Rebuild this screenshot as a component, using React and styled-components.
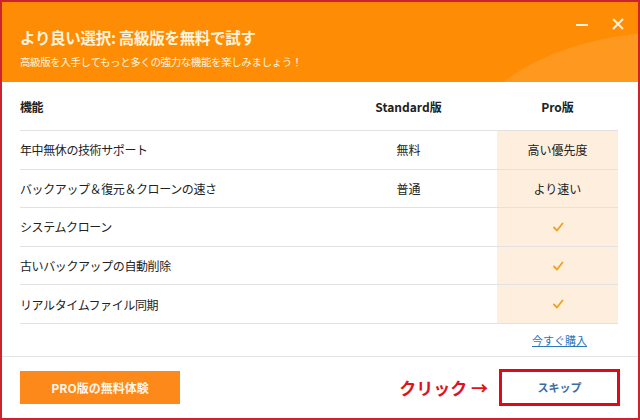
import React from 'react';
import styled, { createGlobalStyle } from 'styled-components';

const GlobalStyle = createGlobalStyle`
  html, body {
    margin: 0;
    padding: 0;
    background: #ffffff;
  }
  body {
    font-family: "Noto Sans CJK JP", "Noto Sans", sans-serif;
  }
`;

const Window = styled.div`
  box-sizing: border-box;
  width: 640px;
  height: 420px;
  border: 2px solid #cf2230;
  display: flex;
  flex-direction: column;
  background: #ffffff;
  overflow: hidden;
`;

const Header = styled.header`
  position: relative;
  height: 80px;
  flex: none;
  display: flex;
  justify-content: space-between;
  padding: 0 10px 0 18px;
  background: #fe8d05;
  overflow: hidden;

  &::after {
    content: '';
    position: absolute;
    left: 462px;
    top: 30px;
    width: 420px;
    height: 240px;
    border-radius: 50%;
    background: rgba(255, 255, 255, 0.1);
    pointer-events: none;
  }
`;

const Heading = styled.div`
  display: flex;
  flex-direction: column;
  padding-top: 24px;
  color: #fff4de;
`;

const Title = styled.h1`
  margin: 0;
  font-size: 15.5px;
  font-weight: 700;
  line-height: 22px;
  letter-spacing: -0.3px;
`;

const Subtitle = styled.p`
  margin: 7px 0 0;
  font-size: 10.5px;
  line-height: 14px;
  letter-spacing: -0.4px;
`;

const Controls = styled.div`
  position: relative;
  z-index: 1;
  display: flex;
  gap: 16px;
  padding-top: 12px;
`;

const ControlButton = styled.button`
  width: 20px;
  height: 20px;
  padding: 0;
  border: none;
  background: transparent;
  display: flex;
  align-items: center;
  justify-content: center;
  cursor: pointer;
`;

const Table = styled.div`
  display: grid;
  grid-template-columns: 300px 177px 121px;
  margin: 0 20px 0 18px;
`;

const Cell = styled.div`
  height: ${({ $head }) => ($head ? '48px' : '37.6px')};
  display: flex;
  align-items: center;
  justify-content: ${({ $left }) => ($left ? 'flex-start' : 'center')};
  border-bottom: 1px solid #e2e2e2;
  background: ${({ $pro }) => ($pro ? '#fdeedd' : 'transparent')};
  font-size: 12px;
  font-weight: ${({ $head }) => ($head ? 700 : 400)};
  color: #222222;
  letter-spacing: ${({ $left }) => ($left ? '-0.4px' : '0')};
`;

const LinkRow = styled.div`
  display: flex;
  justify-content: flex-end;
  margin: 0 20px 0 18px;
  height: 32px;
  align-items: center;
`;

const LinkSlot = styled.div`
  width: 121px;
  display: flex;
  justify-content: center;
`;

const BuyLink = styled.a`
  color: #2a78b8;
  font-size: 11px;
  text-decoration: underline;
  cursor: pointer;
  margin-left: 4px;
`;

const Footer = styled.footer`
  flex: 1;
  display: flex;
  align-items: center;
  border-top: 1px solid #e4e4e4;
  padding: 0 18px;
`;

const TrialButton = styled.button`
  width: 160px;
  height: 33px;
  border: none;
  background: #fe891b;
  color: #fff6e8;
  font-family: inherit;
  font-size: 12px;
  font-weight: 700;
  cursor: pointer;
`;

const Callout = styled.span`
  margin-left: auto;
  margin-right: 11px;
  color: #dc141e;
  font-size: 17px;
  font-weight: 700;
`;

const SkipButton = styled.button`
  box-sizing: border-box;
  width: 121px;
  height: 37px;
  border: 3px solid #dc0a1a;
  background: #ffffff;
  color: #3a6ea5;
  font-family: inherit;
  font-size: 11px;
  font-weight: 700;
  cursor: pointer;
`;

const Check = () => (
  <svg width="14" height="12" viewBox="0 0 14 12">
    <path d="M3 6.5 L6 9.5 L11.5 2.5" fill="none" stroke="#f2a023" strokeWidth="1.8" strokeLinecap="round" strokeLinejoin="round" />
  </svg>
);

const rows = [
  { name: '年中無休の技術サポート', std: '無料', pro: '高い優先度' },
  { name: 'バックアップ＆復元＆クローンの速さ', std: '普通', pro: 'より速い' },
  { name: 'システムクローン', std: '', pro: null },
  { name: '古いバックアップの自動削除', std: '', pro: null },
  { name: 'リアルタイムファイル同期', std: '', pro: null },
];

const App = () => (
  <>
    <GlobalStyle />
    <Window>
      <Header>
        <Heading>
          <Title>より良い選択: 高級版を無料で試す</Title>
          <Subtitle>高級版を入手してもっと多くの強力な機能を楽しみましょう！</Subtitle>
        </Heading>
        <Controls>
          <ControlButton aria-label="最小化">
            <svg width="14" height="14" viewBox="0 0 14 14">
              <path d="M1 8 H13" stroke="#fff1d6" strokeWidth="2" />
            </svg>
          </ControlButton>
          <ControlButton aria-label="閉じる">
            <svg width="14" height="14" viewBox="0 0 14 14">
              <path d="M2 2 L12 12 M12 2 L2 12" stroke="#fff1d6" strokeWidth="2" />
            </svg>
          </ControlButton>
        </Controls>
      </Header>

      <Table>
        <Cell $head $left>機能</Cell>
        <Cell $head>Standard版</Cell>
        <Cell $head>Pro版</Cell>
        {rows.map(row => (
          <React.Fragment key={row.name}>
            <Cell $left>{row.name}</Cell>
            <Cell>{row.std}</Cell>
            <Cell $pro>{row.pro ?? <Check />}</Cell>
          </React.Fragment>
        ))}
      </Table>

      <LinkRow>
        <LinkSlot>
          <BuyLink>今すぐ購入</BuyLink>
        </LinkSlot>
      </LinkRow>

      <Footer>
        <TrialButton>PRO版の無料体験</TrialButton>
        <Callout>クリック →</Callout>
        <SkipButton>スキップ</SkipButton>
      </Footer>
    </Window>
  </>
);

export default App;
